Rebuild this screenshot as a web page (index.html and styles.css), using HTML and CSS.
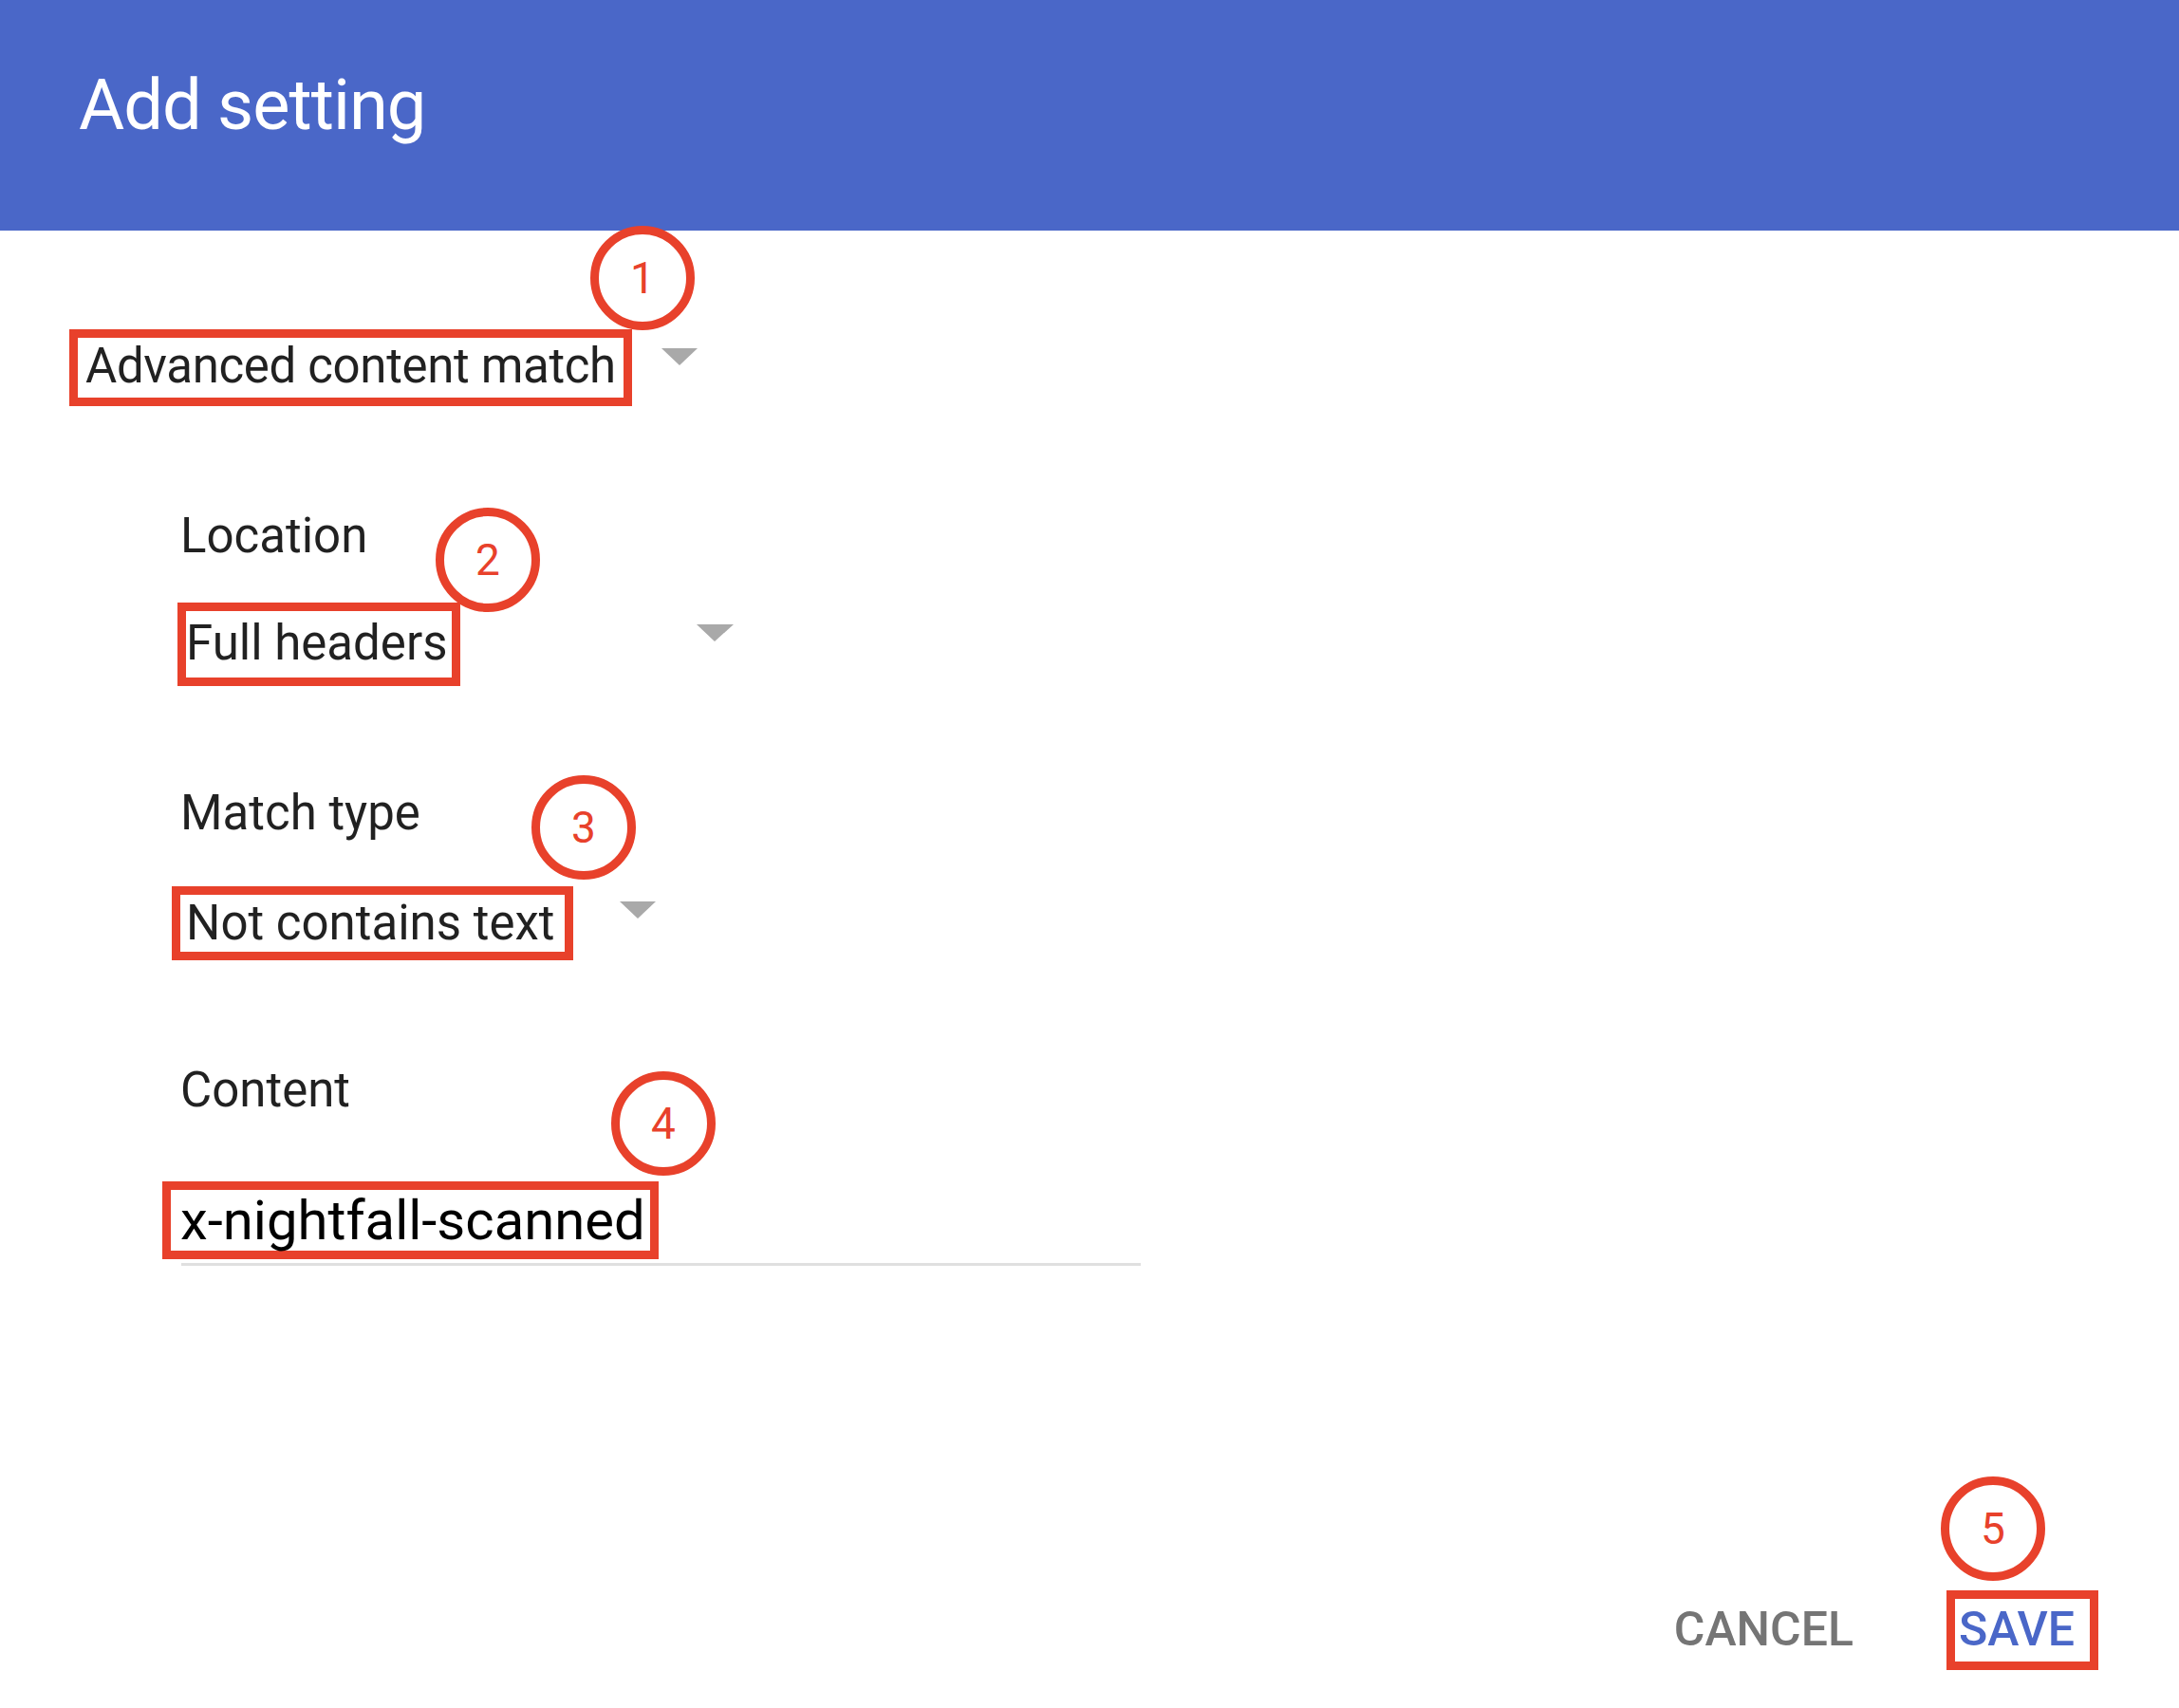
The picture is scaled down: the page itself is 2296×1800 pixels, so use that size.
FILE: index.html
```html
<!DOCTYPE html>
<html lang="en">
<head>
<meta charset="utf-8">
<title>Add setting</title>
<link rel="stylesheet" href="styles.css">
</head>
<body>
<header class="header">
  <h1 class="title">Add setting</h1>
</header>
<main class="form">
  <div class="row row-type">
    <span class="hl val val-type">Advanced content match</span>
    <span class="caret caret-type"></span>
    <span class="badge badge-1">1</span>
  </div>
  <div class="field">
    <div class="label label-loc">Location</div>
    <div class="row row-loc">
      <span class="hl val val-loc">Full headers</span>
      <span class="caret caret-loc"></span>
      <span class="badge badge-2">2</span>
    </div>
    <div class="label label-match">Match type</div>
    <div class="row row-match">
      <span class="hl val val-match">Not contains text</span>
      <span class="caret caret-match"></span>
      <span class="badge badge-3">3</span>
    </div>
    <div class="label label-content">Content</div>
    <div class="input-wrap">
      <span class="hl val val-content">x-nightfall-scanned</span>
      <span class="badge badge-4">4</span>
    </div>
  </div>
</main>
<footer class="actions">
  <span class="btn cancel">CANCEL</span>
  <span class="save-wrap">
    <span class="hl btn save">SAVE</span>
    <span class="badge badge-5">5</span>
  </span>
</footer>
</body>
</html>
```
FILE: styles.css
```css
html, body {
  margin: 0;
  padding: 0;
  background: #ffffff;
}
body {
  font-family: Roboto, "Liberation Sans", Arial, sans-serif;
  color: rgba(0, 0, 0, 0.87);
}
.header {
  height: 243px;
  box-sizing: border-box;
  background: #4a67c8;
  padding: 74px 0 0 83px;
}
.title {
  margin: 0;
  font-size: 74px;
  line-height: 1;
  font-weight: 400;
  letter-spacing: -1px;
  color: #ffffff;
}
.form {
  display: block;
}
.row {
  display: flex;
  align-items: flex-start;
  position: relative;
}
.hl {
  display: inline-block;
  border: 9px solid #e8412b;
}
.val {
  font-size: 51px;
  line-height: 1;
  white-space: nowrap;
}
.caret {
  width: 0;
  height: 0;
  border-left: 19px solid transparent;
  border-right: 19px solid transparent;
  border-top: 18px solid #a9a9a9;
}
.badge {
  position: absolute;
  width: 110px;
  height: 110px;
  box-sizing: border-box;
  border: 9px solid #e8412b;
  border-radius: 50%;
  display: flex;
  align-items: center;
  justify-content: center;
  font-size: 46px;
  line-height: 1;
  color: #e8412b;
  font-weight: 400;
}
.row-type {
  margin: 104px 0 0 73px;
}
.val-type {
  padding: 4px 8px 8px 8px;
  letter-spacing: -0.35px;
}
.caret-type {
  margin: 20px 0 0 31px;
}
.badge-1 {
  left: 549px;
  top: -109px;
}
.field {
  padding-left: 190px;
}
.label {
  font-size: 51px;
  line-height: 1;
  color: rgba(0, 0, 0, 0.87);
}
.label-loc {
  margin-top: 111px;
}
.row-loc {
  margin: 45px 0 0 -3px;
}
.val-loc {
  padding: 8px 4px 11px 0;
}
.caret-loc {
  margin: 23px 0 0 249px;
  border-left-width: 19px;
  border-right-width: 20px;
}
.badge-2 {
  left: 272px;
  top: -100px;
}
.label-match {
  margin-top: 108px;
}
.row-match {
  margin: 52px 0 0 -9px;
}
.val-match {
  padding: 4px 11px 5px 6px;
}
.caret-match {
  margin: 16px 0 0 49px;
}
.badge-3 {
  left: 379px;
  top: -117px;
}
.label-content {
  margin-top: 111px;
}
.input-wrap {
  position: relative;
  display: flex;
  margin: 71px 0 0 1px;
  width: 1011px;
  padding-bottom: 4px;
  border-bottom: 3px solid #e0e0e0;
}
.val-content {
  margin-left: -20px;
  padding: 3px 5px 3px 10px;
  font-size: 58px;
  color: #000000;
}
.badge-4 {
  left: 453px;
  top: -116px;
}
.actions {
  display: flex;
  justify-content: flex-end;
  align-items: baseline;
  margin-top: 342px;
  padding-right: 85px;
}
.btn {
  font-size: 50px;
  line-height: 1;
  font-weight: 500;
}
.cancel {
  color: #757575;
  margin-right: 98px;
}
.save-wrap {
  position: relative;
  display: inline-flex;
}
.save {
  box-sizing: border-box;
  width: 160px;
  color: #4a67c8;
  padding: 7px 0 9px 4px;
}
.badge-5 {
  left: -6px;
  top: -120px;
}
```
